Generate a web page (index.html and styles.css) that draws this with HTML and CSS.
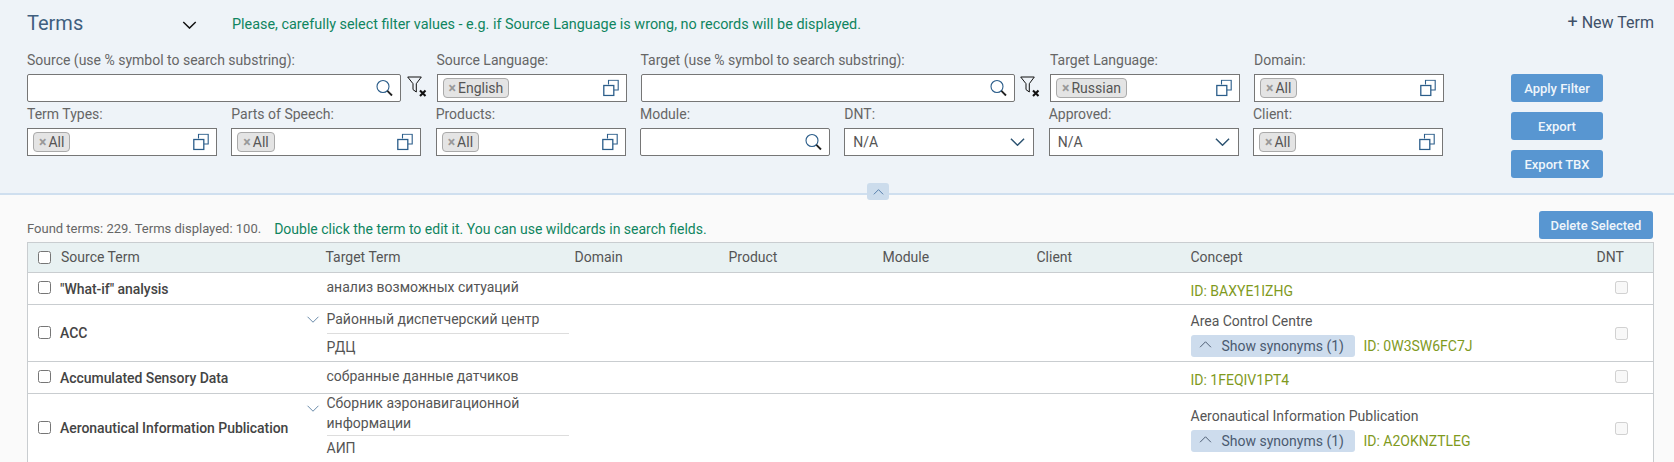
FILE: index.html
```html
<!DOCTYPE html>
<html lang="en">
<head>
    <meta charset="UTF-8">
    <meta name="viewport" content="width=device-width, initial-scale=1.0">
    <title>Terms</title>
    <link rel="stylesheet" href="styles.css">
</head>
<body>

    <svg class="sprites" width="0" height="0">
        <symbol id="i-search" viewBox="0 0 17 17">
            <circle cx="7" cy="7" r="6" fill="none" stroke="#2b5d8a" stroke-width="1.1"/>
            <path d="M11.4 11.4L16 16" fill="none" stroke="#222" stroke-width="1.8"/>
        </symbol>
        <symbol id="i-copy" viewBox="0 0 16 17">
            <path d="M5.5 5V.8h9.7v9.7H11" fill="none" stroke="#2b5d8a" stroke-width="1.1"/>
            <rect x=".8" y="6" width="10" height="10" fill="none" stroke="#2b5d8a" stroke-width="1.3"/>
        </symbol>
        <symbol id="i-clear" viewBox="0 0 20 21">
            <path d="M.7 1h13.6l-5 6.7V16L6 13.6V7.7z" fill="none" stroke="#111" stroke-width="1"/>
            <path d="M13 14.5l5.5 5.5M18.5 14.5L13 20" fill="none" stroke="#111" stroke-width="2.1"/>
        </symbol>
        <symbol id="i-down" viewBox="0 0 16 9">
            <path d="M1 1l7 7 7-7" fill="none" stroke="currentColor" stroke-width="1.6"/>
        </symbol>
        <symbol id="i-down-thin" viewBox="0 0 16 9">
            <path d="M1 1l7 7 7-7" fill="none" stroke="currentColor" stroke-width="1"/>
        </symbol>
        <symbol id="i-up" viewBox="0 0 16 9">
            <path d="M1 8l7-7 7 7" fill="none" stroke="currentColor" stroke-width="1.1"/>
        </symbol>
    </svg>

    <section class="panel">
        <div class="panel-head">
            <div class="title-group">
                <h1 class="title">Terms</h1>
                <svg class="title-arrow"><use href="#i-down"/></svg>
            </div>
            <span class="note">Please, carefully select filter values - e.g. if Source Language is wrong, no records will be displayed.</span>
            <a class="new-term"><span class="plus">+</span> New Term</a>
        </div>

        <div class="filters">
            <div class="filter-rows">
                <div class="filter-row first">
                    <div class="field wide">
                        <label>Source (use % symbol to search substring):</label>
                        <div class="with-clear">
                            <div class="box rounded"><svg class="ico search"><use href="#i-search"/></svg></div>
                            <svg class="clear"><use href="#i-clear"/></svg>
                        </div>
                    </div>
                    <div class="field">
                        <label>Source Language:</label>
                        <div class="box"><span class="tag"><b>×</b>English</span><svg class="ico copy"><use href="#i-copy"/></svg></div>
                    </div>
                    <div class="field wide">
                        <label>Target (use % symbol to search substring):</label>
                        <div class="with-clear">
                            <div class="box rounded"><svg class="ico search"><use href="#i-search"/></svg></div>
                            <svg class="clear"><use href="#i-clear"/></svg>
                        </div>
                    </div>
                    <div class="field">
                        <label>Target Language:</label>
                        <div class="box"><span class="tag"><b>×</b>Russian</span><svg class="ico copy"><use href="#i-copy"/></svg></div>
                    </div>
                    <div class="field">
                        <label>Domain:</label>
                        <div class="box"><span class="tag"><b>×</b>All</span><svg class="ico copy"><use href="#i-copy"/></svg></div>
                    </div>
                </div>
                <div class="filter-row second">
                    <div class="field">
                        <label>Term Types:</label>
                        <div class="box"><span class="tag"><b>×</b>All</span><svg class="ico copy"><use href="#i-copy"/></svg></div>
                    </div>
                    <div class="field">
                        <label>Parts of Speech:</label>
                        <div class="box"><span class="tag"><b>×</b>All</span><svg class="ico copy"><use href="#i-copy"/></svg></div>
                    </div>
                    <div class="field">
                        <label>Products:</label>
                        <div class="box"><span class="tag"><b>×</b>All</span><svg class="ico copy"><use href="#i-copy"/></svg></div>
                    </div>
                    <div class="field">
                        <label>Module:</label>
                        <div class="box rounded"><svg class="ico search"><use href="#i-search"/></svg></div>
                    </div>
                    <div class="field">
                        <label>DNT:</label>
                        <div class="box select">N/A<svg class="ico arrow"><use href="#i-down"/></svg></div>
                    </div>
                    <div class="field">
                        <label>Approved:</label>
                        <div class="box select">N/A<svg class="ico arrow"><use href="#i-down"/></svg></div>
                    </div>
                    <div class="field">
                        <label>Client:</label>
                        <div class="box"><span class="tag"><b>×</b>All</span><svg class="ico copy"><use href="#i-copy"/></svg></div>
                    </div>
                </div>
            </div>
            <div class="actions">
                <button class="btn">Apply Filter</button>
                <button class="btn">Export</button>
                <button class="btn">Export TBX</button>
            </div>
        </div>

        <button class="collapse"><svg><use href="#i-up"/></svg></button>
    </section>

    <section class="results">
        <div class="results-head">
            <span class="found">Found terms: 229. Terms displayed: 100.</span>
            <span class="hint">Double click the term to edit it. You can use wildcards in search fields.</span>
            <button class="btn delete">Delete Selected</button>
        </div>

        <table class="terms">
            <colgroup>
                <col class="c-source">
                <col class="c-target">
                <col class="c-plain">
                <col class="c-plain">
                <col class="c-plain">
                <col class="c-plain">
                <col class="c-concept">
                <col class="c-dnt">
            </colgroup>
            <thead>
                <tr>
                    <th><div class="src"><input type="checkbox">Source Term</div></th>
                    <th class="th-target">Target Term</th>
                    <th>Domain</th>
                    <th>Product</th>
                    <th>Module</th>
                    <th>Client</th>
                    <th>Concept</th>
                    <th class="th-dnt">DNT</th>
                </tr>
            </thead>
            <tbody>
                <tr class="short">
                    <td><div class="src"><input type="checkbox"><strong>"What-if" analysis</strong></div></td>
                    <td><div class="target"><div class="variant">анализ возможных ситуаций</div></div></td>
                    <td></td><td></td><td></td><td></td>
                    <td><span class="id only">ID: BAXYE1IZHG</span></td>
                    <td class="dnt"><input type="checkbox" disabled></td>
                </tr>
                <tr class="double">
                    <td><div class="src"><input type="checkbox"><strong>ACC</strong></div></td>
                    <td class="top">
                        <div class="target">
                            <svg class="expand"><use href="#i-down-thin"/></svg>
                            <div class="variant">Районный диспетчерский центр</div>
                            <div class="variant">РДЦ</div>
                        </div>
                    </td>
                    <td></td><td></td><td></td><td></td>
                    <td>
                        <div class="concept">Area Control Centre</div>
                        <div class="syn-row"><span class="syn"><svg><use href="#i-up"/></svg>Show synonyms (1)</span><span class="id">ID: 0W3SW6FC7J</span></div>
                    </td>
                    <td class="dnt"><input type="checkbox" disabled></td>
                </tr>
                <tr class="short">
                    <td><div class="src"><input type="checkbox"><strong>Accumulated Sensory Data</strong></div></td>
                    <td><div class="target"><div class="variant">собранные данные датчиков</div></div></td>
                    <td></td><td></td><td></td><td></td>
                    <td><span class="id only">ID: 1FEQIV1PT4</span></td>
                    <td class="dnt"><input type="checkbox" disabled></td>
                </tr>
                <tr class="tall">
                    <td><div class="src"><input type="checkbox"><strong>Aeronautical Information Publication</strong></div></td>
                    <td class="top">
                        <div class="target">
                            <svg class="expand"><use href="#i-down-thin"/></svg>
                            <div class="variant">Сборник аэронавигационной информации</div>
                            <div class="variant">АИП</div>
                        </div>
                    </td>
                    <td></td><td></td><td></td><td></td>
                    <td>
                        <div class="concept">Aeronautical Information Publication</div>
                        <div class="syn-row"><span class="syn"><svg><use href="#i-up"/></svg>Show synonyms (1)</span><span class="id">ID: A2OKNZTLEG</span></div>
                    </td>
                    <td class="dnt"><input type="checkbox" disabled></td>
                </tr>
            </tbody>
        </table>
    </section>

</body>
</html>
```

FILE: styles.css
```css
html, body {
    height: 100%;
}
body {
    margin: 0;
    overflow: hidden;
    background-color: #fafafa;
    font-family: Roboto, "Liberation Sans", sans-serif;
    font-size: 14px;
    line-height: 20px;
    color: #555;
}
.sprites {
    position: absolute;
}

/* top filter panel */
.panel {
    position: relative;
    box-sizing: border-box;
    height: 195px;
    padding: 0 21px 0 27px;
    background-color: #eef3f8;
    border-bottom: 2px solid #cfdfef;
}
.panel-head {
    display: flex;
    align-items: center;
    height: 50px;
    box-sizing: border-box;
}
.title-group {
    display: flex;
    align-items: center;
    justify-content: space-between;
    width: 170px;
    margin: -4px 35px 0 0;
}
.title {
    margin: 0;
    font-size: 20px;
    font-weight: 400;
    line-height: 28px;
    color: #3f5f7f;
}
.title-arrow {
    width: 15px;
    height: 8px;
    margin-top: 3px;
    color: #111;
}
.note {
    font-size: 14.4px;
    color: #0f8560;
}
.new-term {
    margin: -6px -1px 0 auto;
    font-size: 16px;
    color: #3f5068;
}
.plus {
    font-size: 18px;
}

.filters {
    display: flex;
    justify-content: space-between;
}
.filter-row {
    display: flex;
}
.filter-row.first .field {
    margin-right: 14px;
}
.filter-row.first .field.wide {
    margin-right: 10px;
}
.filter-row.second {
    justify-content: space-between;
    margin-top: 2px;
    width: 1416px;
}
.field {
    width: 190px;
}
.field.wide {
    width: 399.5px;
}
.field label {
    display: block;
    height: 20px;
    margin-bottom: 4px;
    color: #666;
    white-space: nowrap;
}
.with-clear {
    display: flex;
}
.with-clear .box {
    flex: 1;
}
.clear {
    width: 20px;
    height: 21px;
    margin: 2px 0 0 5.5px;
}
.box {
    position: relative;
    display: flex;
    align-items: center;
    box-sizing: border-box;
    height: 28px;
    padding-left: 5px;
    background-color: #fff;
    border: 1px solid #767676;
}
.box.rounded {
    border-radius: 2px;
}
.box.select {
    padding-left: 8px;
    color: #555;
}
.tag {
    display: inline-flex;
    align-items: center;
    height: 18px;
    padding: 0 5px;
    background-color: #e4e4e4;
    border: 1px solid #aaa;
    border-radius: 4px;
    color: #555;
}
.tag b {
    margin-right: 2px;
    color: #999;
    font-weight: 700;
}
.ico {
    position: absolute;
    top: 50%;
    transform: translateY(-50%);
}
.ico.search {
    right: 7px;
    width: 17px;
    height: 17px;
}
.ico.copy {
    right: 7px;
    width: 16px;
    height: 17px;
}
.ico.arrow {
    right: 8px;
    width: 15px;
    height: 9px;
    color: #2f5573;
}

.actions {
    display: flex;
    flex-direction: column;
    gap: 10px;
    padding: 24px 50px 0 0;
}
.btn {
    height: 28px;
    padding: 0;
    width: 92px;
    border: 0;
    border-radius: 3px;
    background-color: #5896d1;
    color: #eef5fb;
    font-family: inherit;
    font-size: 13px;
    font-weight: 500;
}
.collapse {
    position: absolute;
    left: 867px;
    top: 183px;
    width: 22px;
    height: 17px;
    padding: 0;
    border: 0;
    border-radius: 3px;
    background-color: #ccdcec;
    color: #2f5f94;
}
.collapse svg {
    display: block;
    width: 11px;
    height: 6px;
    margin: 0 auto;
}

/* results */
.results {
    padding: 16px 21px 0 27px;
}
.results-head {
    display: flex;
    align-items: flex-end;
    height: 28px;
    margin-bottom: 3px;
}
.found {
    margin: 0 13px 1px 0;
    font-size: 13px;
    color: #666;
    line-height: 18px;
}
.hint {
    margin-bottom: 1px;
    font-size: 14px;
    color: #0f8560;
    line-height: 18px;
}
.btn.delete {
    margin-left: auto;
    width: 114px;
}

.terms {
    width: 1626px;
    table-layout: fixed;
    border-collapse: collapse;
    background-color: #fff;
    border: 1px solid #c9cdd0;
}
.c-source { width: 272px; }
.c-target { width: 275px; }
.c-plain { width: 154px; }
.c-concept { width: 404px; }
.c-dnt { width: 59px; }
.terms th {
    height: 28px;
    padding: 0 0 1px;
    background-color: #e8f1f2;
    border-bottom: 1px solid #c9cdd0;
    font-weight: 400;
    text-align: left;
    color: #555;
}
.terms .th-target {
    padding-left: 26px;
}
.terms .th-dnt {
    padding-left: 2px;
}
.terms td {
    padding: 0;
    border-bottom: 1px solid #c9cdd0;
    vertical-align: middle;
}
.terms td.top {
    vertical-align: top;
}
.short td { height: 31px; }
.double td { height: 56px; }
.tall td { height: 68px; }

.src {
    display: flex;
    align-items: center;
    padding-left: 10px;
}
.src input {
    width: 13px;
    height: 13px;
    margin: 0 10px 0 0;
}
.src strong {
    font-weight: 500;
    color: #444;
    letter-spacing: -0.05px;
    white-space: nowrap;
}
.terms tbody .src input {
    margin-right: 9px;
    margin-top: -2px;
}
.target {
    position: relative;
    width: 242px;
    margin-left: 27px;
}
.top .target {
    margin-top: -1px;
}
.expand {
    position: absolute;
    left: -21px;
    top: 12px;
    width: 14px;
    height: 7px;
    color: #3f6a92;
}
.variant {
    display: flex;
    align-items: center;
    box-sizing: border-box;
    min-height: 29px;
    color: #555;
    white-space: normal;
}
.short .variant {
    min-height: 0;
    margin-top: -4px;
}
.variant + .variant {
    border-top: 1px solid #ddd;
    min-height: 28px;
    padding-bottom: 2px;
}
.tall .variant {
    min-height: 0;
    padding-bottom: 2px;
}
.tall .variant + .variant {
    padding-top: 2px;
}
.concept {
    margin: 2px 0 4px;
    color: #555;
}
.syn-row {
    display: flex;
    align-items: center;
}
.syn {
    display: flex;
    align-items: center;
    width: 164px;
    height: 22px;
    box-sizing: border-box;
    padding-left: 8px;
    background-color: #cddced;
    border-radius: 3px;
    color: #4a5a70;
}
.syn svg {
    width: 13px;
    height: 7px;
    margin-right: 10px;
    margin-top: -3px;
    color: #3a4a60;
}
.id {
    margin-left: 9px;
    color: #7f9a1e;
}
.id.only {
    display: block;
    margin: 4px 0 0;
}
.dnt input {
    display: block;
    width: 13px;
    height: 13px;
    margin: 0 0 0 20px;
}
.short .dnt input {
    margin-top: -2px;
}
```
